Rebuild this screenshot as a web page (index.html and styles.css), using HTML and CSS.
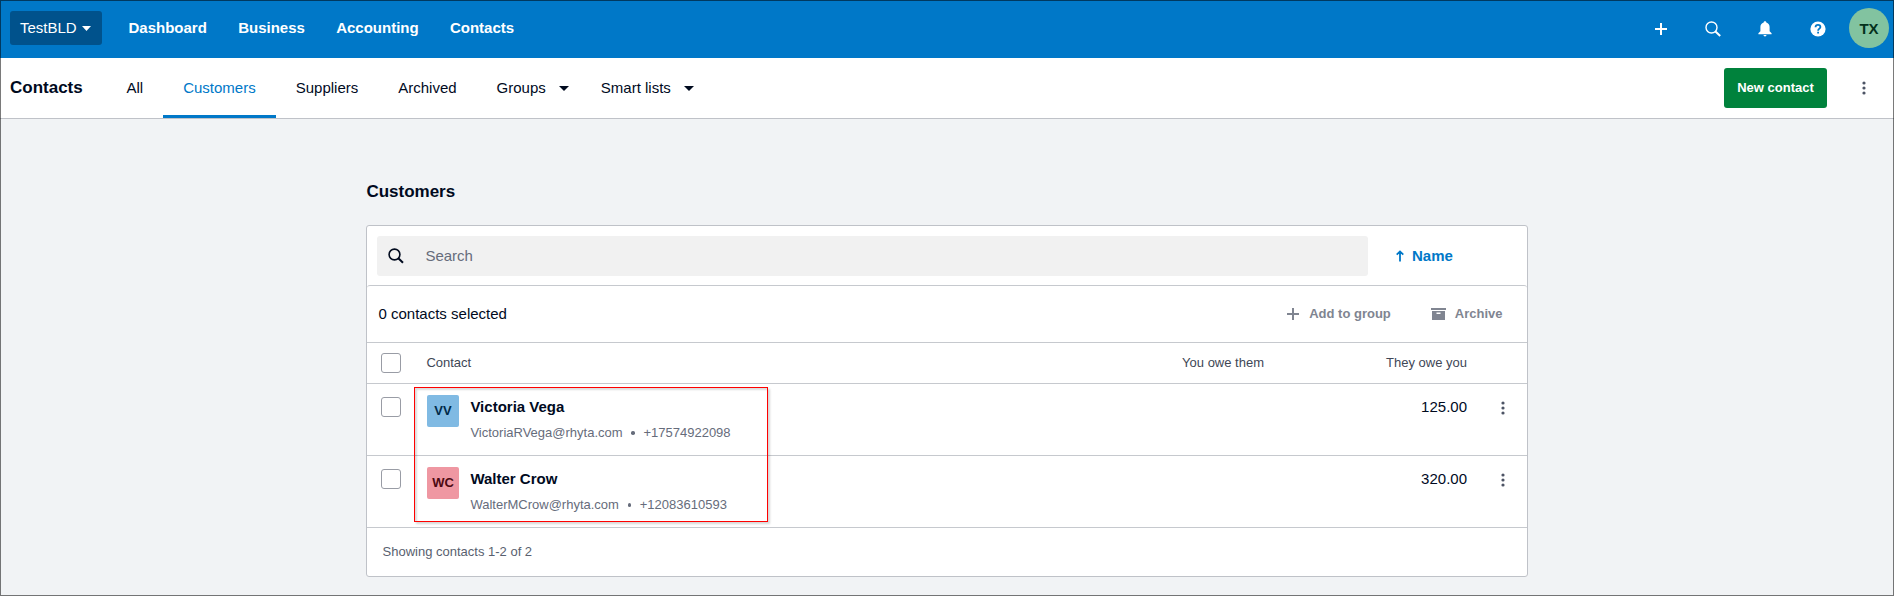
FILE: index.html
```html
<!DOCTYPE html>
<html lang="en">
<head>
<meta charset="utf-8">
<title>Contacts</title>
<link rel="stylesheet" href="styles.css">
</head>
<body>
<div class="page">
  <header class="topbar">
    <button class="org">TestBLD <svg width="9" height="5" viewBox="0 0 9 5"><path d="M0 0h9L4.500 5z" fill="currentColor"/></svg></button>
    <nav class="mainnav"><a>Dashboard</a><a>Business</a><a>Accounting</a><a>Contacts</a></nav>
    <div class="tools">
      <svg class="tool" viewBox="0 0 16 16"><path d="M8 2v12M2 8h12" stroke="currentColor" stroke-width="2"/></svg>
      <svg class="tool" viewBox="0 0 16 16"><circle cx="6.500" cy="6.500" r="5.500" fill="none" stroke="currentColor" stroke-width="1.400"/><path d="M10.500 10.500l4.700 4.500" stroke="currentColor" stroke-width="2"/></svg>
      <svg class="tool" viewBox="0 0 16 16"><path d="M8 .3c.8 0 1.300.5 1.300 1.200C11.500 2.100 12.600 4 12.600 6v4.300l2 2v.9H1.400v-.9l2-2V6c0-2 1.100-3.900 3.300-4.500C6.700.8 7.200.3 8 .3zM6.500 14h3c0 .9-.7 1.400-1.500 1.400S6.500 14.900 6.500 14z" fill="currentColor"/></svg>
      <svg class="tool" viewBox="0 0 16 16"><circle cx="8" cy="8" r="7.600" fill="currentColor"/><path d="M5.500 6.200C5.600 4.700 6.600 3.900 8 3.900s2.400.9 2.400 2.100c0 1.600-2.300 1.700-2.300 3.700" fill="none" stroke="#0078c8" stroke-width="1.800"/><path d="M7.200 10.800h1.800v1.800H7.200z" fill="#0078c8"/></svg>
    </div>
    <div class="user">TX</div>
  </header>

  <div class="subbar">
    <h1 class="section">Contacts</h1>
    <nav class="tabs">
      <a class="tab">All</a>
      <a class="tab active">Customers</a>
      <a class="tab">Suppliers</a>
      <a class="tab">Archived</a>
      <a class="tab">Groups<svg class="caret" viewBox="0 0 10 5"><path d="M0 0h10L5 5z" fill="currentColor"/></svg></a>
      <a class="tab">Smart lists<svg class="caret" viewBox="0 0 10 5"><path d="M0 0h10L5 5z" fill="currentColor"/></svg></a>
    </nav>
    <button class="new">New contact</button>
    <svg class="kebab" viewBox="0 0 4 14"><g fill="currentColor"><circle cx="2" cy="2" r="1.600"/><circle cx="2" cy="7" r="1.600"/><circle cx="2" cy="12" r="1.600"/></g></svg>
  </div>

  <main class="content">
    <h2 class="heading">Customers</h2>
    <section class="panel">
      <div class="searchrow">
        <div class="search">
          <svg width="16" height="16" viewBox="0 0 16 16"><circle cx="6.500" cy="6.500" r="5.400" fill="none" stroke="currentColor" stroke-width="1.600"/><path d="M10.300 10.300l4.700 4.500" stroke="currentColor" stroke-width="2"/></svg>
          <span>Search</span>
        </div>
        <div class="sort"><svg width="8" height="12" viewBox="0 0 8 12"><path d="M4 11.500V1.500M.7 4.700L4 1.400l3.300 3.300" fill="none" stroke="currentColor" stroke-width="1.800"/></svg>Name</div>
      </div>
      <div class="actions">
        <span class="count">0 contacts selected</span>
        <span class="action add"><svg width="12" height="12" viewBox="0 0 12 12"><path d="M6 0v12M0 6h12" stroke="currentColor" stroke-width="2"/></svg>Add to group</span>
        <span class="action archive"><svg width="15" height="12" viewBox="0 0 15 12"><path d="M0 0h15v2H0zM1 3h13v9H1z" fill="currentColor"/><path d="M5.500 4.500h4V6h-4z" fill="#fff"/></svg>Archive</span>
      </div>
      <div class="row head">
        <span class="check"></span><span>Contact</span><span class="num">You owe them</span><span class="num">They owe you</span>
      </div>
      <div class="row item">
        <span class="check"></span>
        <div class="contact"><span class="avatar blue">VV</span><div><div class="name">Victoria Vega</div><div class="detail"><span>VictoriaRVega@rhyta.com</span><i class="dot"></i><span>+17574922098</span></div></div></div>
        <span></span><span class="num amount">125.00</span>
        <svg class="kebab" viewBox="0 0 4 14"><g fill="currentColor"><circle cx="2" cy="2" r="1.600"/><circle cx="2" cy="7" r="1.600"/><circle cx="2" cy="12" r="1.600"/></g></svg>
      </div>
      <div class="row item">
        <span class="check"></span>
        <div class="contact"><span class="avatar pink">WC</span><div><div class="name">Walter Crow</div><div class="detail"><span>WalterMCrow@rhyta.com</span><i class="dot"></i><span>+12083610593</span></div></div></div>
        <span></span><span class="num amount">320.00</span>
        <svg class="kebab" viewBox="0 0 4 14"><g fill="currentColor"><circle cx="2" cy="2" r="1.600"/><circle cx="2" cy="7" r="1.600"/><circle cx="2" cy="12" r="1.600"/></g></svg>
      </div>
      <div class="foot">Showing contacts 1-2 of 2</div>
      <div class="highlight"></div>
    </section>
  </main>
  <div class="frame"></div>
</div>
</body>
</html>
```
FILE: styles.css
```css
* { box-sizing: border-box; }
body { margin: 0; }
svg { display: block; flex: none; }
button { font: inherit; border: 0; }

.page {
  position: relative;
  height: 596px;
  overflow: hidden;
  background: #f1f3f5;
  color: #000a1e;
  font: 15px/20px "Liberation Sans", Arial, sans-serif;
}
.frame {
  position: absolute;
  inset: 0;
  border: 1px solid rgba(0, 0, 0, .52);
  pointer-events: none;
}

.topbar {
  display: flex;
  align-items: center;
  height: 58px;
  padding: 0 5px 2px 10px;
  background: #0078c8;
  color: #fff;
}
.org {
  display: flex;
  align-items: center;
  gap: 5px;
  width: 92px;
  height: 34px;
  padding: 0 0 0 10px;
  border-radius: 3px;
  background: #00528c;
  color: #fff;
}
.mainnav { display: flex; gap: 31.3px; margin-left: 26.5px; font-weight: bold; }
.tools { display: flex; gap: 36.2px; margin: 1px 23.500px 0 auto; }
.tool { width: 16px; height: 16px; }
.user {
  width: 40px;
  height: 40px;
  border-radius: 50%;
  background: #82c3a0;
  color: #04311c;
  font-weight: bold;
  line-height: 41px;
  text-align: center;
}

.subbar {
  display: flex;
  align-items: center;
  height: 61px;
  padding-right: 28.5px;
  border-bottom: 1px solid #bfc2c8;
  background: #fff;
}
.section { width: 96.5px; margin: 0 0 0 10px; font-size: 17px; line-height: 20px; }
.tabs { display: flex; align-self: stretch; }
.tab { display: flex; align-items: center; padding: 0 20px; }
.active { color: #0078c8; box-shadow: inset 0 -3px #0078c8; }
.caret { width: 10px; height: 5px; margin: 1px -8px 0 13px; }
.new {
  width: 103px;
  height: 40px;
  margin: 0 34.5px 0 auto;
  padding: 0;
  border-radius: 3px;
  background: #00823c;
  color: #fff;
  font-size: 13px;
  font-weight: bold;
}
.kebab { width: 4px; height: 14px; color: #4d5465; }

.content { width: 1162px; margin: 0 auto; padding-top: 63px; }
.heading { margin: 0 0 23px .4px; font-size: 17px; line-height: 20px; }
.panel {
  position: relative;
  height: 352px;
  border: 1px solid #bfc2c8;
  border-radius: 3px;
  background: #fff;
}
.searchrow { display: flex; align-items: flex-start; height: 59px; padding: 10px; }
.search {
  display: flex;
  align-items: center;
  gap: 21.4px;
  width: 991px;
  height: 40px;
  padding-left: 11px;
  border-radius: 3px;
  background: #f1f1f1;
}
.search svg { margin-top: -1px; }
.search span { color: #666c7b; }
.sort {
  display: flex;
  align-items: center;
  gap: 8px;
  height: 40px;
  margin-left: 28px;
  color: #0078c8;
  font-weight: bold;
}
.actions {
  display: flex;
  align-items: center;
  height: 58px;
  padding: 0 24.5px 0 11.5px;
  border-top: 1px solid #c6c9ce;
  border-bottom: 1px solid #c6c9ce;
  border-radius: 3px 3px 0 0;
}
.count { margin-right: auto; }
.action { display: flex; align-items: center; color: #808591; font-size: 13px; font-weight: bold; }
.add { gap: 10px; margin-right: 40px; }
.archive { gap: 9px; }

.row {
  display: grid;
  grid-template-columns: 46px 621px 216px 203px 39px;
  padding-left: 14px;
  border-bottom: 1px solid #c6c9ce;
}
.head { height: 41px; align-items: center; color: #404756; font-size: 13px; }
.head > span:nth-child(2) { margin-left: -.6px; }
.item { height: 72px; align-items: start; padding-top: 11px; }
.check { width: 20px; height: 20px; border: 1px solid #999ca5; border-radius: 3px; background: #fff; }
.item .check { margin-top: 2px; }
.num { text-align: right; }
.amount { margin-top: 2px; }
.item .kebab { margin: 6px 0 0 33.5px; }
.contact { display: flex; gap: 11.4px; }
.avatar {
  width: 32px;
  height: 32px;
  border-radius: 2px;
  font-size: 13px;
  font-weight: bold;
  line-height: 31px;
  text-align: center;
}
.blue { background: #80bae3; color: #002a49; }
.pink { background: #ef97a2; color: #4d0912; }
.name { margin-top: 2px; font-weight: bold; }
.detail { display: flex; align-items: center; margin-top: 6px; color: #666c7b; font-size: 13px; }
.dot { width: 3.5px; height: 3.5px; margin: 0 8.7px; border-radius: 50%; background: currentColor; }
.foot { padding: 14px 15.5px; color: #595f6f; font-size: 13px; }
.highlight {
  position: absolute;
  left: 47px;
  top: 161px;
  width: 354px;
  height: 135px;
  border: 1px solid #f00;
  box-shadow: 2px 2px 2px rgba(0, 0, 0, .16), inset 2px 2px 2px rgba(0, 0, 0, .14);
}
```
